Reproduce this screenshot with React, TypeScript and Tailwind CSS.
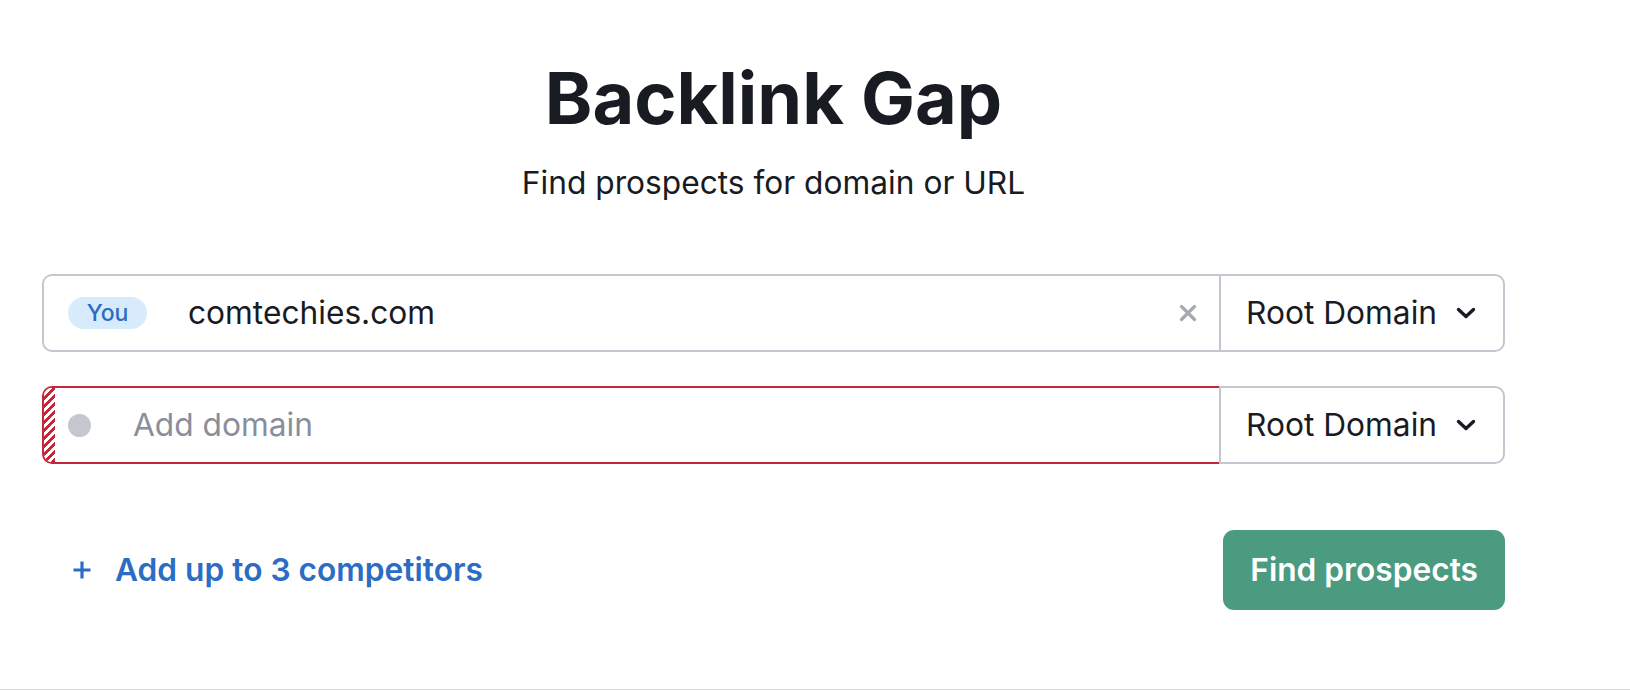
import React from 'react';

const ClearIcon = () => (
  <svg width="18" height="18" viewBox="0 0 18 18" className="shrink-0">
    <path d="M2.5 2.5 L15.5 15.5 M15.5 2.5 L2.5 15.5" stroke="#a6a9b2" strokeWidth="3.2" strokeLinecap="round" fill="none" />
  </svg>
);

const Chevron = () => (
  <svg width="20" height="12" viewBox="0 0 20 12" className="shrink-0">
    <path d="M2.5 2.5 L10 9.5 L17.5 2.5" stroke="#191b23" strokeWidth="3.4" strokeLinecap="round" strokeLinejoin="round" fill="none" />
  </svg>
);

const PlusIcon = () => (
  <svg width="20" height="20" viewBox="0 0 20 20" className="shrink-0">
    <path d="M10 1.5 V18.5 M1.5 10 H18.5" stroke="#2b6cc4" strokeWidth="3.2" fill="none" />
  </svg>
);

const SelectBox = () => (
  <button className="flex h-full w-[286px] shrink-0 items-center justify-between rounded-r-[10px] border-2 border-[#c4c7cf] pl-[25px] pr-[27px] text-[31.7px] text-[#191b23]">
    <span>Root Domain</span>
    <Chevron />
  </button>
);

export default function App() {
  return (
    <div className="h-[690px] border-b border-[#dadada] bg-white font-['Inter',sans-serif] text-[#191b23]">
      <div className="ml-[42px] w-[1463px] pt-[62px]">
        <h1 className="text-center text-[72px] font-bold leading-[72px]">Backlink Gap</h1>
        <p className="mt-[29px] text-center text-[31.7px] leading-[40px]">Find prospects for domain or URL</p>

        <div className="mt-[71px] flex flex-col gap-[34px]">
          {/* you */}
          <div className="flex h-[78px]">
            <div className="flex flex-1 items-center rounded-l-[10px] border-y-2 border-l-2 border-[#c4c7cf] pl-[24px] pr-[22px]">
              <span className="flex h-[32px] w-[79px] shrink-0 items-center justify-center rounded-full bg-[#d8ebfd] text-[23px] font-medium text-[#2b6cc4]">
                You
              </span>
              <span className="ml-[41px] flex-1 text-[31.7px]">comtechies.com</span>
              <ClearIcon />
            </div>
            <SelectBox />
          </div>

          {/* competitor */}
          <div className="flex h-[78px]">
            <div className="flex flex-1 items-center overflow-hidden rounded-l-[10px] border-y-2 border-l-2 border-[#c3283a]">
              <div className="h-full w-[11px] shrink-0 bg-[repeating-linear-gradient(135deg,#c3283a_0px,#c3283a_3px,#ffffff_3px,#ffffff_5.7px)]" />
              <span className="ml-[13px] h-[23px] w-[23px] shrink-0 rounded-full bg-[#c4c7cf]" />
              <span className="ml-[42px] text-[31.7px] text-[#8a8e9b]">Add domain</span>
            </div>
            <SelectBox />
          </div>
        </div>

        <div className="mt-[66px] flex items-center justify-between">
          <button className="ml-[30px] flex items-center gap-[23px] text-[31.7px] font-semibold text-[#2b6cc4]">
            <PlusIcon />
            <span>Add up to 3 competitors</span>
          </button>
          <button className="flex h-[80px] items-center rounded-[11px] bg-[#4a9b80] px-[27px] text-[31.7px] font-semibold text-white">
            Find prospects
          </button>
        </div>
      </div>
    </div>
  );
}
